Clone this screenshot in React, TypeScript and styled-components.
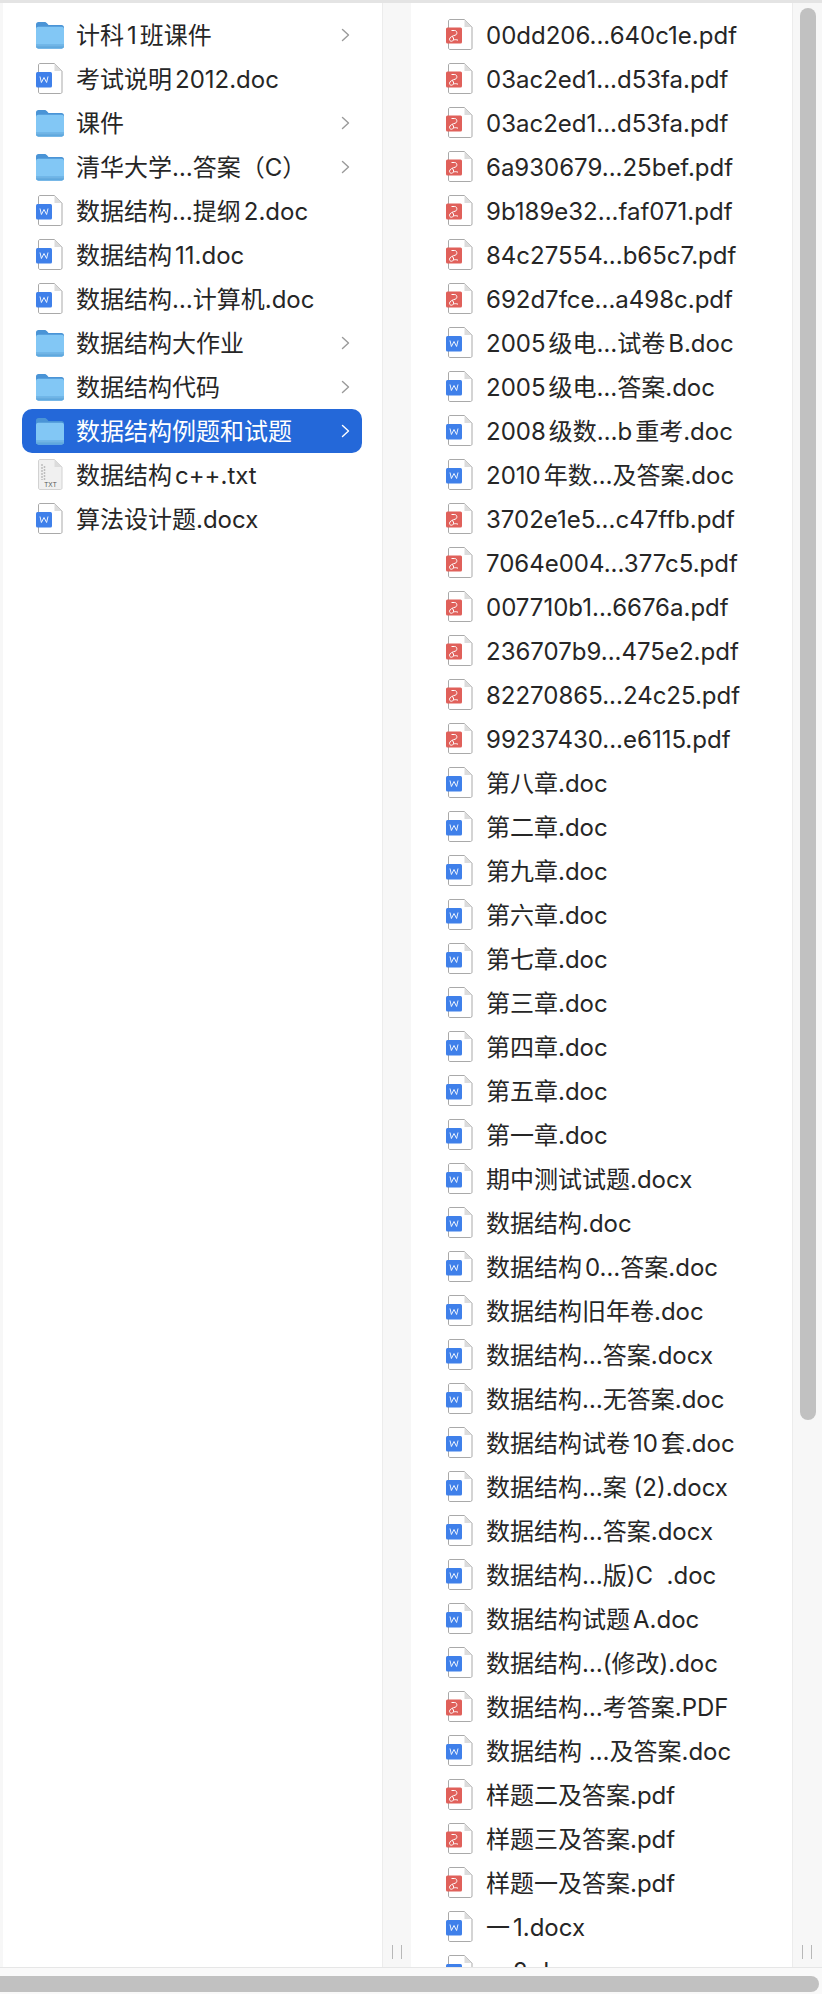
import React from 'react'
import styled, { createGlobalStyle } from 'styled-components'

type Kind = 'folder' | 'word' | 'pdf' | 'txt'
type Item = { name: string; kind: Kind; selected?: boolean }

const w = (name: string): Item => ({ name, kind: 'word' })
const p = (name: string): Item => ({ name, kind: 'pdf' })
const f = (name: string, selected?: boolean): Item => ({ name, kind: 'folder', selected })

const leftItems: Item[] = [
  f('计科1班课件'),
  w('考试说明2012.doc'),
  f('课件'),
  f('清华大学…答案（C）'),
  w('数据结构…提纲2.doc'),
  w('数据结构11.doc'),
  w('数据结构…计算机.doc'),
  f('数据结构大作业'),
  f('数据结构代码'),
  f('数据结构例题和试题', true),
  { name: '数据结构c++.txt', kind: 'txt' },
  w('算法设计题.docx'),
]

const rightItems: Item[] = [
  p('00dd206...640c1e.pdf'),
  p('03ac2ed1...d53fa.pdf'),
  p('03ac2ed1...d53fa.pdf'),
  p('6a930679...25bef.pdf'),
  p('9b189e32...faf071.pdf'),
  p('84c27554...b65c7.pdf'),
  p('692d7fce...a498c.pdf'),
  w('2005级电…试卷B.doc'),
  w('2005级电…答案.doc'),
  w('2008级数…b重考.doc'),
  w('2010年数…及答案.doc'),
  p('3702e1e5...c47ffb.pdf'),
  p('7064e004...377c5.pdf'),
  p('007710b1...6676a.pdf'),
  p('236707b9...475e2.pdf'),
  p('82270865...24c25.pdf'),
  p('99237430...e6115.pdf'),
  w('第八章.doc'),
  w('第二章.doc'),
  w('第九章.doc'),
  w('第六章.doc'),
  w('第七章.doc'),
  w('第三章.doc'),
  w('第四章.doc'),
  w('第五章.doc'),
  w('第一章.doc'),
  w('期中测试试题.docx'),
  w('数据结构.doc'),
  w('数据结构0…答案.doc'),
  w('数据结构旧年卷.doc'),
  w('数据结构…答案.docx'),
  w('数据结构…无答案.doc'),
  w('数据结构试卷10套.doc'),
  w('数据结构…案 (2).docx'),
  w('数据结构…答案.docx'),
  w('数据结构…版)C  .doc'),
  w('数据结构试题A.doc'),
  w('数据结构…(修改).doc'),
  p('数据结构…考答案.PDF'),
  w('数据结构 …及答案.doc'),
  p('样题二及答案.pdf'),
  p('样题三及答案.pdf'),
  p('样题一及答案.pdf'),
  w('一1.docx'),
  w('一2.docx'),
]

const FolderIcon = () => (
  <svg width="30" height="30" viewBox="0 0 30 30">
    <path d="M1 4.500C1 3 2 2 3.500 2h6c1 0 1.600.4 2.300 1.100L13.500 5H26.500C28 5 29 6 29 7.500V26c0 1.500-1 2.500-2.500 2.500h-23C2 28.500 1 27.500 1 26z" fill="#4a94d6" />
    <path d="M1 9c0-1.300 1-2.200 2.300-2.200h23.400C28 6.800 29 7.700 29 9v17c0 1.500-1 2.500-2.500 2.500h-23C2 28.500 1 27.500 1 26z" fill="#82c7f5" />
    <path d="M1 24.500h28V26c0 1.500-1 2.500-2.500 2.500h-23C2 28.500 1 27.500 1 26z" fill="#5fa8de" />
    <path d="M1 25.800h28" stroke="#8cc6ec" strokeWidth="0.6" />
  </svg>
)

const Page = ({ grey }: { grey?: boolean }) => (
  <>
    <path
      d="M5 .5h14.500L27 8v21c0 .8-.6 1.500-1.500 1.500H5c-.8 0-1.500-.7-1.500-1.500V2c0-.8.700-1.500 1.500-1.500z"
      fill={grey ? '#f0f0f0' : '#fff'}
      stroke={grey ? '#d2d2d2' : '#a9a9a9'}
    />
    <path d="M19.500 .5V8H27z" fill="#dcdcdc" />
  </>
)

const WordIcon = () => (
  <svg width="30" height="32" viewBox="0 0 30 32">
    <Page />
    <rect x="1" y="9" width="16" height="15.500" rx="1.500" fill="#3f80ea" />
    <path d="M5 13.500l1.400 6 2.600-5 2.600 5 1.400-6" fill="none" stroke="#fff" strokeWidth="0.9" />
  </svg>
)

const PdfIcon = () => (
  <svg width="30" height="32" viewBox="0 0 30 32">
    <Page />
    <rect x="1" y="8.500" width="16" height="16" rx="1.500" fill="#e0605a" />
    <path d="M6.500 11.500h3.200c2.500 0 3 4 .5 4.700C8 16.800 4.500 18 4.500 20.300c0 2 2.500 2.700 3.800.9.900-1.300-.2-3.300-1.300-3.900M8.500 21c1.500-.5 2.800-.4 4.500.2" fill="none" stroke="#fff" strokeWidth="1" />
  </svg>
)

const TxtIcon = () => (
  <svg width="30" height="32" viewBox="0 0 30 32">
    <Page grey />
    <path d="M7 5v16M9.500 7v14" stroke="#bdbdbd" strokeWidth="1.500" strokeDasharray="2 1" />
    <text x="15.500" y="27.500" fontSize="6.500" textAnchor="middle" fill="#555" fontFamily="Liberation Sans, sans-serif">TXT</text>
  </svg>
)

const icons: Record<Kind, React.FC> = {
  folder: FolderIcon,
  word: WordIcon,
  pdf: PdfIcon,
  txt: TxtIcon,
}

const Chevron = ({ color }: { color: string }) => (
  <svg width="9" height="14" viewBox="0 0 9 14">
    <path d="M1.500 1.500L7.500 7l-6 5.500" fill="none" stroke={color} strokeWidth="1.400" strokeLinecap="round" strokeLinejoin="round" />
  </svg>
)

const List = ({ items }: { items: Item[] }) => (
  <>
    {items.map((item, i) => {
      const Icon = icons[item.kind]
      return (
        <Row key={i} $selected={item.selected}>
          <IconSlot>
            <Icon />
          </IconSlot>
          <Name>{item.name}</Name>
          {item.kind === 'folder' && (
            <Arrow>
              <Chevron color={item.selected ? '#fff' : '#9a9a9a'} />
            </Arrow>
          )}
        </Row>
      )
    })}
  </>
)

export default function App() {
  return (
    <Window>
      <GlobalStyle />
      <Panes>
        <Pane $width={379} $inset={19}>
          <List items={leftItems} />
        </Pane>
        <Gutter $width={29}>
          <Grip />
        </Gutter>
        <Pane $width={381} $inset={21}>
          <List items={rightItems} />
        </Pane>
        <Gutter $width={30}>
          <VThumb />
          <Grip />
        </Gutter>
      </Panes>
      <BottomBar>
        <HThumb />
      </BottomBar>
    </Window>
  )
}

const GlobalStyle = createGlobalStyle`
  html, body {
    margin: 0;
    padding: 0;
    background: #f7f7f7;
    overflow: hidden;
  }
`

const Window = styled.div`
  width: 822px;
  height: 1994px;
  display: flex;
  flex-direction: column;
  overflow: hidden;
  background: #f7f7f7;
  border-top: 3px solid #e4e4e4;
  box-sizing: border-box;
  font-family: Inter, 'Noto Sans CJK SC', sans-serif;
  color: #262626;
`

const Panes = styled.div`
  display: flex;
  height: 1965px;
  padding-left: 3px;
  border-bottom: 1px solid #e6e6e6;
  box-sizing: border-box;
`

const Pane = styled.div<{ $width: number; $inset: number }>`
  width: ${(props) => props.$width}px;
  height: 100%;
  padding: 10px 20px 0 ${(props) => props.$inset}px;
  box-sizing: border-box;
  background: #fff;
  overflow: hidden;
  flex: none;
`

const Gutter = styled.div<{ $width: number }>`
  position: relative;
  width: ${(props) => props.$width}px;
  height: 100%;
  flex: none;
  border-left: 1px solid #ececec;
  box-sizing: border-box;
`

const Grip = styled.div`
  position: absolute;
  left: 9px;
  bottom: 8px;
  width: 8px;
  height: 14px;
  border-left: 1px solid #b8b8b8;
  border-right: 1px solid #b8b8b8;
`

const VThumb = styled.div`
  position: absolute;
  top: 5px;
  left: 7px;
  width: 16px;
  height: 1412px;
  border-radius: 8px;
  background: #c1c1c1;
`

const BottomBar = styled.div`
  flex: 1;
  display: flex;
  align-items: center;
  padding-top: 6px;
  background: #f9f9f9;
`

const HThumb = styled.div`
  width: 819px;
  height: 16px;
  border-radius: 0 8px 8px 0;
  background: #c1c1c1;
`

const Row = styled.div<{ $selected?: boolean }>`
  display: flex;
  align-items: center;
  height: 44px;
  padding-left: 13px;
  border-radius: 10px;
  background: ${(props) => (props.$selected ? '#2468d9' : 'transparent')};
  color: ${(props) => (props.$selected ? '#fff' : 'inherit')};
`

const IconSlot = styled.span`
  flex: none;
  width: 30px;
  margin-right: 11px;
  display: flex;
  justify-content: center;
`

const Name = styled.span`
  flex: 1;
  font-size: 24px;
  line-height: 30px;
  margin-top: 2px;
  white-space: pre;
  text-autospace: normal;
`

const Arrow = styled.span`
  flex: none;
  display: flex;
  margin-right: 12px;
`
